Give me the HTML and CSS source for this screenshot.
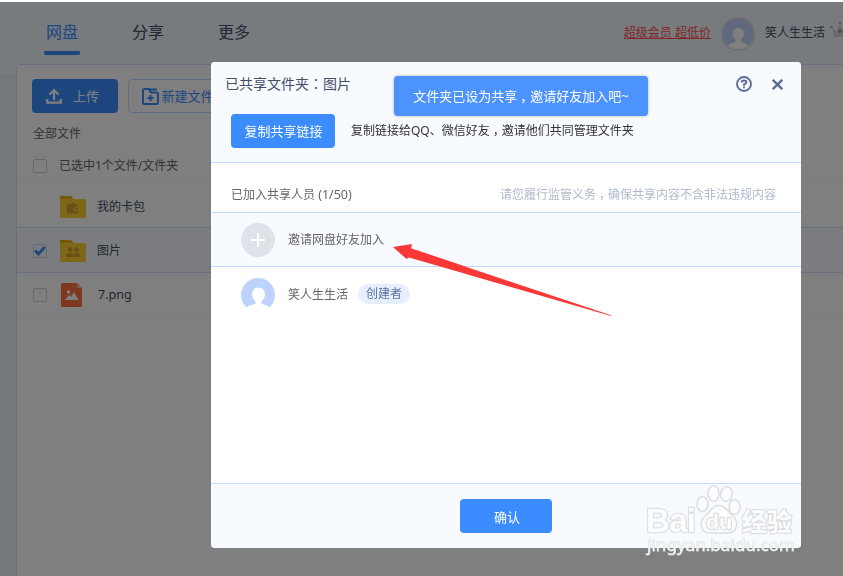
FILE: index.html
```html
<!DOCTYPE html>
<html lang="zh-CN">
<head>
    <meta charset="UTF-8" />
    <meta name="viewport" content="width=device-width, initial-scale=1.0"/>
    <title>网盘</title>
    <link rel="stylesheet" href="styles.css">
</head>
<body>
    <div class="page">
        <header class="header">
            <nav class="nav">
                <a href="#" class="nav-link active">网盘</a>
                <a href="#" class="nav-link">分享</a>
                <a href="#" class="nav-link">更多</a>
            </nav>
            <div class="user">
                <a href="#" class="vip-link">超级会员 超低价</a>
                <svg class="user-avatar" viewBox="0 0 34 34">
                    <circle cx="17" cy="17" r="16" fill="#bed1fa" stroke="#d9dde2" stroke-width="2"/>
                    <path d="M6.500 29.500C8 26 12 26 14.500 24.800V22.500C10 18.500 10.500 11 17.300 11s7.300 7.500 2.800 11.500v2.300c2.500 1.200 6 1.200 7.500 4.700Q17 35 6.500 29.500z" fill="#fff"/>
                </svg>
                <span class="user-name">笑人生生活</span>
                <svg class="crown" viewBox="0 0 18 18">
                    <path d="M2 7l4 3 4-7 4 7 4-3-1 9H4z" fill="#d4d4d4"/>
                    <circle cx="1.500" cy="6" r="1.500" fill="#bbb"/>
                    <circle cx="10" cy="2" r="1.500" fill="#bbb"/>
                    <circle cx="10" cy="10" r="2" fill="#999"/>
                </svg>
            </div>
        </header>

        <main class="panel">
            <div class="toolbar">
                <button class="btn btn-upload">
                    <svg width="16" height="16" viewBox="0 0 16 16" fill="none" stroke="#fff" stroke-width="2.200">
                        <path d="M8 12V3M3.500 6.500L8 2l4.500 4.500M1.200 11v3.700h13.600V11"/>
                    </svg>
                    上传
                </button>
                <button class="btn btn-folder">
                    <svg width="17" height="17" viewBox="0 0 17 17" fill="none" stroke="#3b8cff" stroke-width="2">
                        <path d="M1 2.500Q1 1 2.500 1H7l2 3.500H14.500Q16 4.500 16 6v8.500Q16 16 14.500 16h-12Q1 16 1 14.500zM5.500 10h6M8.500 7v6"/>
                        <path d="M8 1.500h7"/>
                    </svg>
                    新建文件夹
                </button>
            </div>
            <div class="breadcrumb">全部文件</div>
            <div class="list-head">
                <span class="checkbox"></span>
                <span>已选中1个文件/文件夹</span>
            </div>
            <div class="file">
                <span class="checkbox hidden"></span>
                <svg class="file-icon" viewBox="0 0 26 22">
                    <path d="M0 1q0-1 1-1h10l2.500 3H24v6H0z" fill="#e6b400"/>
                    <rect y="3" width="26" height="19" rx="1.500" fill="#ffcf33"/>
                    <path d="M7 8.500l8-1.700V8.500h2q1 0 1 1V11h-3q-1.500 0-1.500 2t1.500 2h3v1.500q0 1-1 1H8q-1 0-1-1z" fill="#d99f2b"/>
                    <rect x="15" y="12" width="3" height="2" fill="#d99f2b"/>
                </svg>
                <span>我的卡包</span>
            </div>
            <div class="file selected">
                <span class="checkbox">
                    <svg width="12" height="12" viewBox="0 0 12 12" fill="none" stroke="#3b8cff" stroke-width="2.800">
                        <path d="M1.200 5.500l3.300 3.500 6.200-7"/>
                    </svg>
                </span>
                <svg class="file-icon" viewBox="0 0 26 22">
                    <path d="M0 1q0-1 1-1h10l2.500 3H24v6H0z" fill="#e6b400"/>
                    <rect y="3" width="26" height="19" rx="1.500" fill="#ffcf33"/>
                    <g fill="#d99f2b">
                        <circle cx="10" cy="9.500" r="2.500"/>
                        <circle cx="16.500" cy="9.500" r="2.500"/>
                        <path d="M6 17v-1.500q0-2.500 4-2.500t4 2.500V17zM15 17v-1.500q0-1.500-1-2.300 6-.8 6 2.300V17z"/>
                    </g>
                </svg>
                <span>图片</span>
            </div>
            <div class="file last">
                <span class="checkbox"></span>
                <svg class="file-icon image-icon" viewBox="0 0 21 24">
                    <path d="M1.500 0H16l5 5v17.500q0 1.500-1.500 1.500h-18Q0 24 0 22.500v-21Q0 0 1.500 0z" fill="#ff7043"/>
                    <path d="M16 0l5 5h-4q-1 0-1-1z" fill="#ffb59d"/>
                    <circle cx="7.500" cy="9" r="1.700" fill="#fff"/>
                    <path d="M4 17l4-5 2 2 3-5 4.500 8z" fill="#fff"/>
                </svg>
                <span class="file-name-latin">7.png</span>
            </div>
        </main>
    </div>

    <div class="overlay">
        <div class="dialog">
            <div class="dialog-header">
                <div class="dialog-title">
                    <h2>已共享文件夹<span class="colon" lang="zh-TW">：</span>图片</h2>
                    <div class="dialog-tools">
                        <svg width="16" height="16" viewBox="0 0 16 16" fill="none" stroke="#5a6c93" stroke-width="1.900">
                            <circle cx="8" cy="8" r="7"/>
                            <path d="M5.600 6.600Q5.600 4.500 8 4.500t2.400 1.900Q10.400 7.500 8 8.400v1.300M8 10.600v1.700"/>
                        </svg>
                        <svg width="11" height="11" viewBox="0 0 11 11" fill="none" stroke="#5a6c93" stroke-width="2.300">
                            <path d="M.8.800l9.400 9.400M10.200.800L.8 10.200"/>
                        </svg>
                    </div>
                </div>
                <div class="copy-row">
                    <button class="btn btn-copy">复制共享链接</button>
                    <span>复制链接给QQ、微信好友<span class="comma">，</span>邀请他们共同管理文件夹</span>
                </div>
            </div>

            <div class="members-head">
                <span>已加入共享人员 <span class="count">(1/50)</span></span>
                <span class="notice">请您履行监管义务<span class="comma">，</span>确保共享内容不含非法违规内容</span>
            </div>
            <div class="member invite">
                <svg class="avatar" viewBox="0 0 34 34">
                    <circle cx="17" cy="17" r="17" fill="#dfe2e9"/>
                    <path d="M17 10v14M10 17h14" stroke="#fff" stroke-width="2"/>
                </svg>
                <span>邀请网盘好友加入</span>
            </div>
            <div class="member creator">
                <svg class="avatar" viewBox="0 0 34 34">
                    <circle cx="17" cy="17" r="17" fill="#bed3fc"/>
                    <path d="M2 34C5 27 11 27.500 14.500 25.800V23.500C9 19 10 9.500 17.500 9.500S26 19 20.500 23.500v2.300C24 27.500 29 27 32 34z" fill="#fff"/>
                    <path d="M0 30h34v4H0z" fill="#fff"/>
                </svg>
                <span>笑人生生活</span>
                <span class="tag">创建者</span>
            </div>

            <div class="dialog-footer">
                <button class="btn btn-ok">确认</button>
            </div>
        </div>
    </div>

    <div class="toast">文件夹已设为共享<span class="comma">，</span>邀请好友加入吧~</div>

    <svg class="arrow" viewBox="0 0 220 76">
        <path d="M1 7l19-3-1 4.300L219 75.300v.700L17 17.500 14.500 19z" fill="#fb3838"/>
    </svg>

    <svg class="watermark" viewBox="0 0 160 84">
        <text class="wm-text wm-bai" x="6" y="54" textLength="50">Bai</text>
        <g class="wm-paw">
            <ellipse cx="62.500" cy="26" rx="5.500" ry="7.500"/>
            <ellipse cx="73.500" cy="15.500" rx="5.500" ry="7.700"/>
            <ellipse cx="86.500" cy="16" rx="5.800" ry="7.300" transform="rotate(10 86.500 16)"/>
            <ellipse cx="94.500" cy="29" rx="5.500" ry="7.300"/>
            <path d="M79 27.500c6 0 8 5 13 9.500 7 6 6 18-5 18H71c-12 0-12-12-5-18 5-4.500 7-9.500 13-9.500z"/>
        </g>
        <text class="wm-text wm-du" x="66" y="51" textLength="26">du</text>
        <text class="wm-text wm-name" x="102" y="53">经验</text>
        <text class="wm-url" x="7" y="73" textLength="148">jingyan.baidu.com</text>
    </svg>
</body>
</html>
```

FILE: styles.css
```css
* {
    box-sizing: border-box;
    margin: 0;
    padding: 0;
}

body {
    width: 843px;
    height: 576px;
    overflow: hidden;
    font-family: "Noto Sans", "Noto Sans CJK SC", sans-serif;
    font-size: 12px;
    line-height: 18px;
    color: #424e67;
}

svg {
    display: block;
    flex: none;
}

a {
    color: inherit;
    text-decoration: none;
}

/* Centred full-width punctuation */
.colon {
    font-family: "Noto Sans CJK TC", sans-serif;
    line-height: 1;
}

.comma {
    margin: 0 -3px 0 3px;
}

/* Page */
.page {
    height: 576px;
    border-top: 2px solid #fff;
    background: linear-gradient(#eff6fc, #f0f7fc) no-repeat 0 0 / 100% 72px,
                linear-gradient(#dfe9f2, #ecf3f8 120px);
    display: flex;
    flex-direction: column;
}

.header {
    height: 62px;
    padding: 0 0 0 44px;
    display: flex;
    justify-content: space-between;
}

.nav {
    display: flex;
    gap: 50px;
}

.nav-link {
    width: 36px;
    height: 53px;
    padding-top: 18px;
    font-size: 16px;
    line-height: 24px;
    text-align: center;
    white-space: nowrap;
}

.nav-link.active {
    color: #3b8cff;
    border-bottom: 4px solid #3b8cff;
    border-radius: 2px;
}

.user {
    height: 62px;
    display: flex;
    align-items: center;
}

.vip-link {
    color: #ff4f4f;
    text-decoration: underline;
    white-space: nowrap;
}

.user-avatar {
    width: 34px;
    height: 34px;
    margin: 2px 10px 0 10px;
}

.crown {
    width: 18px;
    height: 18px;
    margin: -6px -5px 0 5px;
}

/* File panel */
.panel {
    flex: 1;
    margin-left: 16px;
    border: 1px solid #d4dffa;
    border-width: 1px 0 0 1px;
    border-radius: 4px 0 0 0;
    background-color: #fff;
}

.toolbar {
    display: flex;
    gap: 10px;
    padding: 14px 0 0 15px;
}

.btn {
    height: 34px;
    border: none;
    border-radius: 4px;
    background-color: #3b8cff;
    color: #fff;
    font-family: inherit;
    font-size: 13px;
    line-height: 20px;
    white-space: nowrap;
    display: flex;
    align-items: center;
    justify-content: center;
}

.btn-upload {
    width: 86px;
    padding-right: 5px;
    gap: 11px;
}

.btn-folder {
    width: 116px;
    padding-right: 3px;
    gap: 2px;
    border: 1px solid #c0d9fe;
    background-color: #fff;
    color: #3b8cff;
}

.breadcrumb {
    padding: 12px 0 0 16px;
    color: #666;
}

.list-head {
    height: 41px;
    padding: 6px 0 0 16px;
    border-bottom: 1px solid #f2f6fd;
    display: flex;
    align-items: center;
    gap: 12px;
    color: #666;
}

.checkbox {
    width: 14px;
    height: 14px;
    border: 1px solid #cfd3dc;
    border-radius: 2px;
    display: flex;
    align-items: center;
    justify-content: center;
}

.checkbox.hidden {
    visibility: hidden;
}

.file {
    height: 45px;
    padding: 1px 0 0 16px;
    border-bottom: 1px solid #f2f6fd;
    display: flex;
    align-items: center;
}

.file:nth-child(4) {
    height: 44px;
    padding-top: 2px;
    border-color: #cfe0ff;
}

.file.selected {
    background-color: #f4f9ff;
    border-color: #cfe0ff;
}

.file.last {
    padding-top: 0;
}

.file-icon {
    width: 26px;
    height: 22px;
    margin: 0 11px 0 13px;
}

.image-icon {
    width: 21px;
    height: 24px;
    margin: 0 16px 0 14px;
}

.file-name-latin {
    font-size: 12.5px;
}

/* Share dialog */
.overlay {
    position: fixed;
    top: 2px;
    left: 0;
    right: 0;
    bottom: 0;
    padding: 60px 42px 28px 211px;
    background-color: rgba(0, 0, 0, 0.5);
}

.dialog {
    width: 590px;
    height: 486px;
    border-radius: 4px;
    background-color: #fff;
    overflow: hidden;
    display: flex;
    flex-direction: column;
}

.dialog-header {
    height: 101px;
    padding: 10px 18px 0 14px;
    background-color: #f7faff;
    border-bottom: 1px solid #c4dbff;
}

.dialog-title {
    height: 24px;
    display: flex;
    align-items: center;
    justify-content: space-between;
}

.dialog-title h2 {
    font-size: 14px;
    font-weight: 400;
}

.dialog-tools {
    display: flex;
    align-items: center;
    gap: 20px;
}

.copy-row {
    padding: 18px 0 0 6px;
    display: flex;
    align-items: center;
    gap: 16px;
    color: #333;
}

.btn-copy {
    width: 104px;
    padding-left: 1px;
}

.members-head {
    height: 50px;
    padding: 14px 25px 0 20px;
    border-bottom: 1px solid #c4dbff;
    display: flex;
    align-items: center;
    justify-content: space-between;
    color: #666;
}

.count {
    font-size: 12.5px;
}

.notice {
    color: #afb9cc;
}

.member {
    height: 54px;
    padding-left: 30px;
    display: flex;
    align-items: center;
    color: #666;
}

.member.invite {
    background-color: #f7faff;
    border-bottom: 1px solid #c4dbff;
}

.member.creator {
    padding-top: 2px;
}

.avatar {
    width: 34px;
    height: 34px;
    margin-right: 13px;
}

.tag {
    height: 20px;
    margin: -2px 0 0 10px;
    padding: 0 8px;
    border-radius: 10px;
    background-color: #e7effe;
    color: #5a6f99;
    line-height: 20px;
}

.dialog-footer {
    height: 65px;
    margin-top: auto;
    border-top: 1px solid #c4dbff;
    background-color: #f7faff;
    display: flex;
    align-items: center;
    justify-content: center;
}

.btn-ok {
    width: 92px;
    padding: 1px 0 0 2px;
}

/* Toast */
.toast {
    position: fixed;
    top: 76px;
    left: 394px;
    width: 254px;
    height: 40px;
    border-radius: 4px;
    background-color: #4c93ff;
    box-shadow: 0 0 3px rgba(0, 0, 0, 0.3);
    color: #fff;
    font-size: 13px;
    line-height: 40px;
    text-align: center;
    white-space: nowrap;
}

.arrow {
    position: fixed;
    top: 240px;
    left: 392px;
    width: 220px;
    height: 76px;
}

/* Watermark */
.watermark {
    position: fixed;
    top: 478px;
    left: 640px;
    width: 160px;
    height: 84px;
}

.wm-text {
    fill: #fdfdfe;
    stroke: #dcdfe3;
    stroke-width: 2.500px;
    stroke-linejoin: round;
    paint-order: stroke fill;
}

.wm-bai {
    font: 700 33px "Liberation Sans", sans-serif;
}

.wm-paw {
    fill: #fdfdfe;
    stroke: #dcdfe3;
    stroke-width: 1.600px;
}

.wm-du {
    font: 700 21px "Liberation Sans", sans-serif;
}

.wm-name {
    font: 700 25px "Noto Sans CJK SC", sans-serif;
}

.wm-url {
    font: 400 17px "Noto Sans", sans-serif;
    fill: #f4f5f6;
    stroke: #d3d5d8;
    stroke-width: 0.800px;
    paint-order: stroke fill;
}
```
